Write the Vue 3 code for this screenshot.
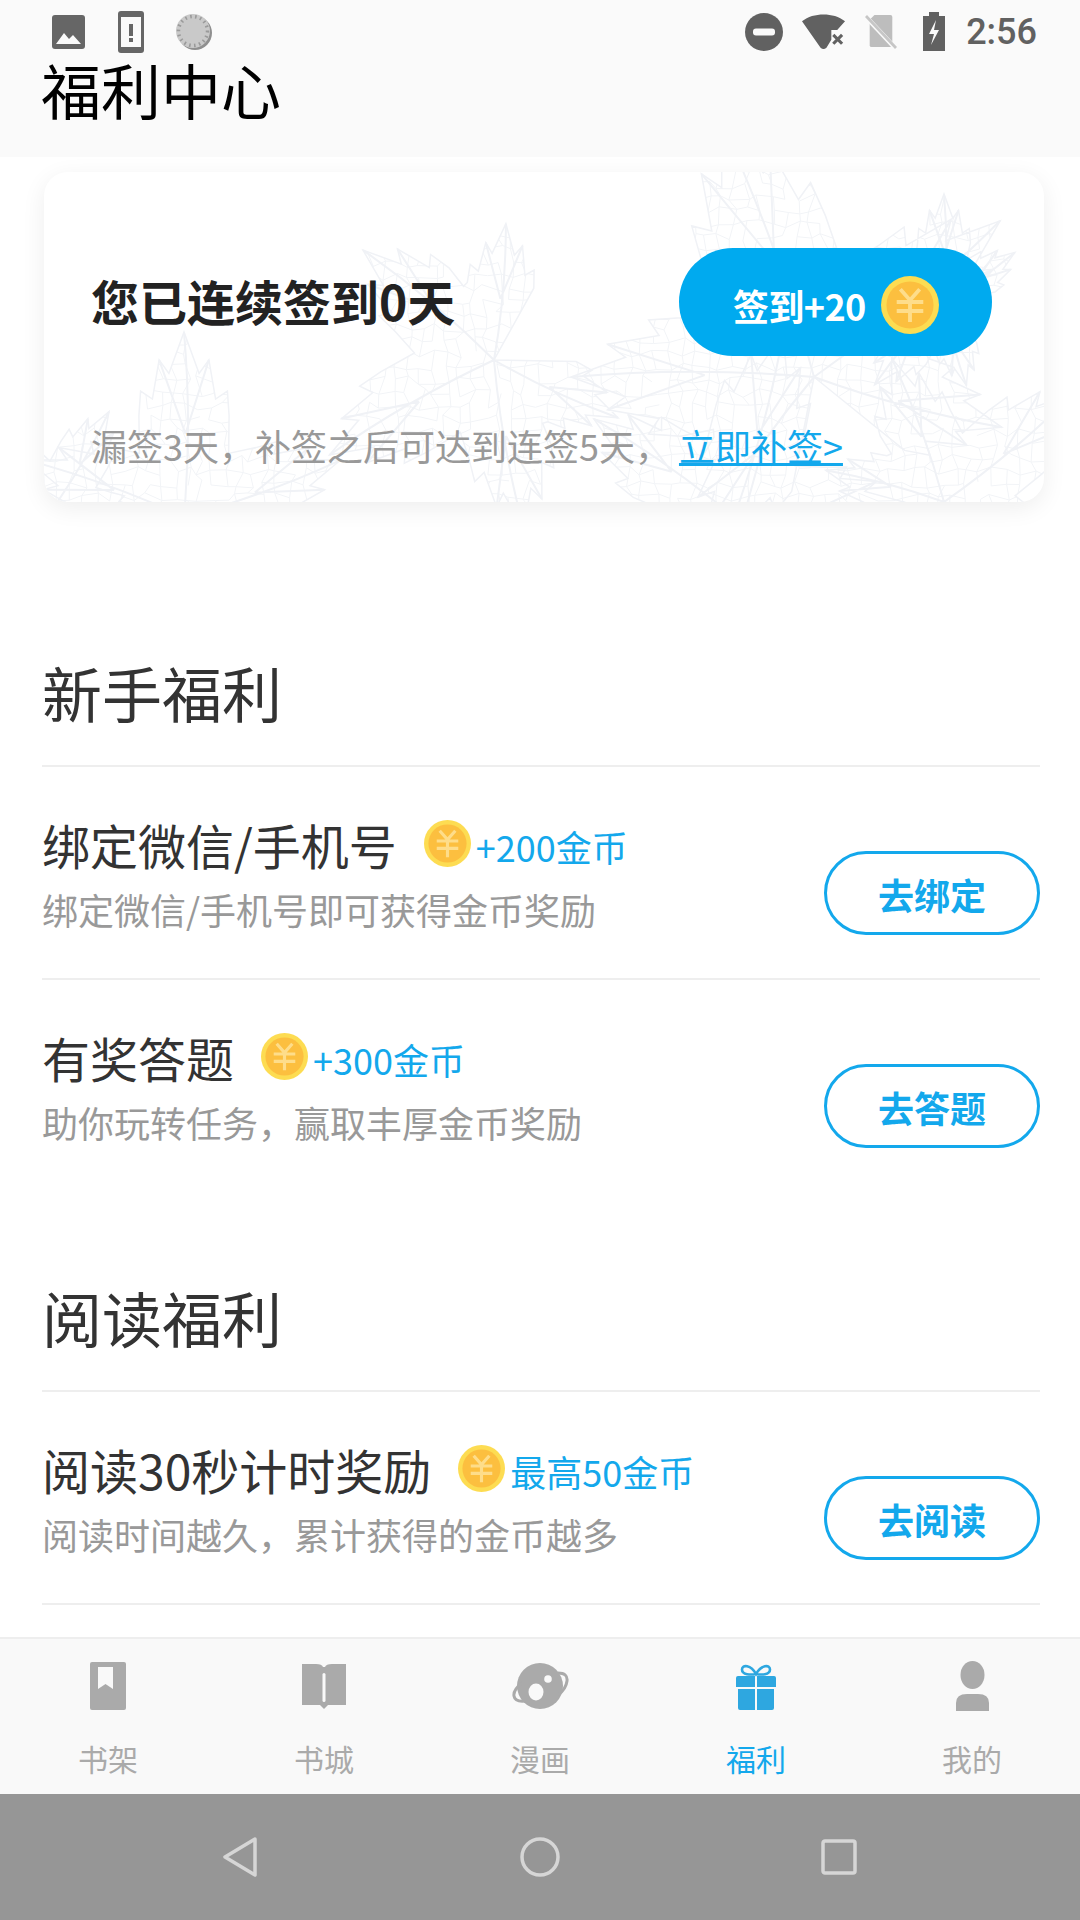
<template>
  <div class="page">
    <header class="top">
      <div class="status">
        <div class="status-left">
          <svg width="33" height="34" viewBox="0 0 33 34"><rect width="33" height="34" y="0" rx="3" fill="#666"/><path d="M4 29l8-11 5 6 4-4 8 9z" fill="#fafafa"/></svg>
          <svg width="26" height="42" viewBox="0 0 26 42"><rect width="26" height="42" rx="3" fill="#666"/><rect x="3" y="6" width="20" height="30" fill="#fafafa"/><rect x="11" y="13" width="4" height="12" fill="#666"/><rect x="11" y="27" width="4" height="4" fill="#666"/></svg>
          <svg class="sync" width="38" height="38" viewBox="0 0 38 38"><circle cx="20" cy="20" r="17" fill="#8f8f8f"/><circle cx="18" cy="18" r="17" fill="#c9c9c9"/><circle cx="18" cy="18" r="14.5" fill="none" stroke="#9a9a9a" stroke-width="3.5" stroke-dasharray="1.6 3.4"/></svg>
        </div>
        <div class="status-right">
          <svg width="38" height="38" viewBox="0 0 38 38"><circle cx="19" cy="19" r="19" fill="#616161"/><rect x="8" y="15.5" width="22" height="7" rx="3" fill="#fafafa"/></svg>
          <svg width="44" height="38" viewBox="0 0 45 38"><path d="M0 8C6 3 14 1 22 1s16 2 22 7L36 17H30V27L25 35Q22 38 19 35z" fill="#616161"/><path d="M32 22l9 9m0-9l-9 9" stroke="#616161" stroke-width="3.2"/></svg>
          <svg width="32" height="38" viewBox="0 0 34 38"><path d="M5 6V33q0 2 2 2H27q2 0 2-2V3q0-2-2-2H10z" fill="#bdbdbd"/><path d="M1 3L33 37" stroke="#fafafa" stroke-width="5"/><path d="M1 2L33 36" stroke="#c6c6c6" stroke-width="3"/></svg>
          <svg class="battery" width="22" height="39" viewBox="0 0 22 39"><path d="M6 0h10v4h6v35H0V4h6z" fill="#616161"/><path d="M13 8L6 22h5L8 33l8-15h-5z" fill="#fafafa"/></svg>
          <span class="time">2:56</span>
        </div>
      </div>
      <h1 class="page-title">福利中心</h1>
    </header>

    <main class="content">
      <section class="sign-card">
        <svg class="leaves" width="1000" height="330" viewBox="0 0 1000 330">
          <defs>
            <clipPath id="leaf-clip"><path :d="outlinePath"/></clipPath>
          </defs>
          <path :d="meshPath" clip-path="url(#leaf-clip)" fill="none" stroke="#f2f4f7" stroke-width="1"/>
          <path :d="outlinePath" fill="none" stroke="#f0f2f6" stroke-width="1.5"/>
          <path :d="veinPath" fill="none" stroke="#f0f2f6" stroke-width="2"/>
        </svg>
        <div class="sign-head">
          <div class="sign-title">您已连续签到0天</div>
          <button class="sign-btn">
            <span class="sign-btn-text">签到+20</span>
            <svg class="coin-big" viewBox="0 0 48 48"><use href="#coin"/></svg>
          </button>
        </div>
        <div class="sign-sub">漏签3天&#xFF0C;补签之后可达到连签5天&#xFF0C;<a class="sign-link">立即补签></a></div>
      </section>

      <svg width="0" height="0" class="defs">
        <symbol id="coin" viewBox="0 0 48 48">
          <circle cx="24" cy="24" r="24" fill="#fddc52"/>
          <circle cx="24" cy="24" r="19.5" fill="#fcbf3f"/>
          <path d="M16 11l8 9 8-9M13 21.5h22M13 29h22M24 20v18" fill="none" stroke="#fedd8a" stroke-width="3.2"/>
        </symbol>
      </svg>

      <section v-for="group in groups" :key="group.title" class="group" :class="group.cls">
        <h2 class="group-title">{{ group.title }}</h2>
        <div v-for="item in group.items" :key="item.title" class="row" :class="{ 'no-line': item.noLine }">
          <div class="row-text">
            <div class="row-title">
              <span>{{ item.title }}</span>
              <svg class="coin" viewBox="0 0 48 48"><use href="#coin"/></svg>
              <span class="reward">{{ item.reward }}</span>
            </div>
            <div class="row-sub">{{ item.sub }}</div>
          </div>
          <button class="go-btn">{{ item.action }}</button>
        </div>
      </section>
    </main>

    <nav class="tabs">
      <div v-for="tab in tabs" :key="tab.name" class="tab" :class="{ active: tab.active }">
        <div class="tab-icon">
          <svg v-if="tab.name === '书架'" width="36" height="48" viewBox="0 0 36 48"><rect width="36" height="48" rx="2" fill="#aaa"/><path d="M8 5h15v22l-7.500-5L8 27z" fill="#f9f9f9"/></svg>
          <svg v-else-if="tab.name === '书城'" width="44" height="46" viewBox="0 0 44 46"><path d="M0 1h14q6 0 7 3h2q1-3 7-3h14v41H26l-4 4-4-4H0z" fill="#aaa"/><rect x="20.500" y="10" width="3" height="29" rx="1.500" fill="#f9f9f9"/></svg>
          <svg v-else-if="tab.name === '漫画'" width="57" height="46" viewBox="0 0 57 46"><ellipse cx="28" cy="23" rx="23" ry="23" fill="#aaa"/><path d="M46 10q10 0 9 8t-9 14" fill="none" stroke="#aaa" stroke-width="3"/><path d="M10 20q-9 7-8 13t11 5" fill="none" stroke="#aaa" stroke-width="3"/><ellipse cx="24" cy="29" rx="7.500" ry="8.500" fill="#f9f9f9"/><circle cx="36" cy="16" r="3.800" fill="#f9f9f9"/></svg>
          <svg v-else-if="tab.name === '福利'" width="40" height="47" viewBox="0 0 40 47"><path d="M20 11C15 2 6 1 6 6.500S15 12 20 11c5 1 14 1 14-4.500S25 2 20 11z" fill="none" stroke="#2ea7e0" stroke-width="2.600"/><path d="M2 13h17v11H0V15q0-2 2-2zm19 0h17q2 0 2 2v9H21zM2 26h17v21H4q-2 0-2-2zm19 0h17v19q0 2-2 2H21z" fill="#2ea7e0"/></svg>
          <svg v-else width="33" height="50" viewBox="0 0 33 50"><ellipse cx="16.500" cy="14" rx="12" ry="14" fill="#aaa"/><path d="M0 50V42Q0 33 11 33H22Q33 33 33 42V50z" fill="#aaa"/></svg>
        </div>
        <span class="tab-label">{{ tab.name }}</span>
      </div>
    </nav>

    <footer class="sys-nav">
      <svg width="36" height="42" viewBox="0 0 36 42"><path d="M33 3L3 21l30 18z" fill="none" stroke="#d6d6d6" stroke-width="3.500" stroke-linejoin="round"/></svg>
      <svg width="40" height="40" viewBox="0 0 40 40"><circle cx="20" cy="20" r="18" fill="none" stroke="#d6d6d6" stroke-width="3.500"/></svg>
      <svg width="36" height="36" viewBox="0 0 36 36"><rect x="2" y="2" width="32" height="32" rx="2" fill="none" stroke="#d6d6d6" stroke-width="3.500"/></svg>
    </footer>
  </div>
</template>

<script setup>
const groups = [
  {
    title: '新手福利',
    cls: 'first',
    items: [
      { title: '绑定微信/手机号', reward: '+200金币', sub: '绑定微信/手机号即可获得金币奖励', action: '去绑定' },
      { title: '有奖答题', reward: '+300金币', sub: '助你玩转任务\uFF0C赢取丰厚金币奖励', action: '去答题', noLine: true }
    ]
  },
  {
    title: '阅读福利',
    cls: 'second',
    items: [
      { title: '阅读30秒计时奖励', reward: '最高50金币', sub: '阅读时间越久\uFF0C累计获得的金币越多', action: '去阅读' }
    ]
  }
];

const tabs = [
  { name: '书架' },
  { name: '书城' },
  { name: '漫画' },
  { name: '福利', active: true },
  { name: '我的' }
];

// faint maple leaf skeletons behind the sign-in card
let seed = 11;
const rnd = () => {
  seed = (seed * 16807) % 2147483647;
  return seed / 2147483647;
};

const leaves = [
  { x: 450, y: 188, rot: 150, size: 190 },
  { x: 770, y: 205, rot: 250, size: 270 },
  { x: 140, y: 345, rot: 270, size: 185 },
  { x: 690, y: 345, rot: 285, size: 190 },
  { x: 900, y: 130, rot: 200, size: 120 },
  { x: 900, y: 330, rot: 320, size: 170 },
  { x: 10, y: 335, rot: 300, size: 110 }
];

const lobes = [
  [-125, 0.72],
  [-70, 0.9],
  [0, 1],
  [70, 0.9],
  [125, 0.72]
];

const polar = (leaf, deg, r) => {
  const a = ((leaf.rot + deg) * Math.PI) / 180;
  return [leaf.x + Math.cos(a) * r, leaf.y + Math.sin(a) * r];
};
const fmt = p => p[0].toFixed(1) + ' ' + p[1].toFixed(1);

let outline = '';
let veins = '';
for (const leaf of leaves) {
  const pts = [[leaf.x, leaf.y]];
  lobes.forEach(([deg, k], i) => {
    const r = leaf.size * k;
    // teeth climbing to the lobe tip and back down
    [[-24, 0.6], [-19, 0.72], [-15, 0.66], [-9, 0.86], [-6, 0.78], [0, 1], [6, 0.78], [9, 0.86], [15, 0.66], [19, 0.72], [24, 0.6]].forEach(([d, f]) => {
      pts.push(polar(leaf, deg + d, r * f));
    });
    if (i < lobes.length - 1) pts.push(polar(leaf, (deg + lobes[i + 1][0]) / 2, leaf.size * 0.42));
    const tip = polar(leaf, deg, r);
    const bend = polar(leaf, deg + 5, r * 0.5);
    veins += `M${fmt([leaf.x, leaf.y])}Q${fmt(bend)} ${fmt(tip)}`;
    // side veins towards the teeth
    veins += `M${fmt(polar(leaf, deg + 1, r * 0.45))}L${fmt(polar(leaf, deg - 9, r * 0.86))}`;
    veins += `M${fmt(polar(leaf, deg + 1, r * 0.45))}L${fmt(polar(leaf, deg + 9, r * 0.86))}`;
  });
  outline += 'M' + pts.map(fmt).join('L') + 'Z';
}

// jittered net of small cells, clipped to the leaves
const cell = 13;
const nodes = [];
for (let r = 0; r <= 26; r++) {
  const line = [];
  for (let c = 0; c <= 78; c++) {
    line.push([c * cell + (rnd() - 0.5) * 9, r * cell + (rnd() - 0.5) * 9]);
  }
  nodes.push(line);
}
let mesh = '';
nodes.forEach((line, r) => {
  line.forEach((p, c) => {
    if (line[c + 1] && rnd() > 0.18) mesh += `M${fmt(p)}L${fmt(line[c + 1])}`;
    if (nodes[r + 1] && rnd() > 0.18) mesh += `M${fmt(p)}L${fmt(nodes[r + 1][c])}`;
  });
});

const outlinePath = outline;
const veinPath = veins;
const meshPath = mesh;
</script>

<style>
html,
body {
  margin: 0;
  background: #fff;
}
</style>

<style scoped>
.page {
  width: 1080px;
  height: 1920px;
  display: flex;
  flex-direction: column;
  overflow: hidden;
  background: #fff;
  font-family: "Noto Sans CJK SC", "Noto Sans", sans-serif;
}

.top {
  height: 157px;
  flex: none;
  background: #fafafa;
}

.status {
  height: 63px;
  display: flex;
  justify-content: space-between;
  align-items: center;
  padding: 0 43px 0 52px;
}

.status-left,
.status-right {
  display: flex;
  align-items: center;
}

.status-left {
  gap: 33px;
}

.sync {
  margin-left: -2px;
}

.status-right {
  gap: 19px;
}

.battery {
  margin-left: 7px;
}

.time {
  font-family: Roboto, sans-serif;
  font-size: 36px;
  font-weight: 500;
  color: #616161;
  margin-left: 2px;
}

.page-title {
  margin: -4px 0 0 41px;
  font-size: 60px;
  line-height: 60px;
  font-weight: 400;
  color: #000;
}

.content {
  flex: 1;
  min-height: 0;
  overflow: hidden;
  padding: 15px 40px 0 42px;
}

.sign-card {
  position: relative;
  width: 1000px;
  height: 330px;
  box-sizing: border-box;
  margin-left: 2px;
  padding: 76px 52px 0 47px;
  overflow: hidden;
  background: #fff;
  border-radius: 24px;
  box-shadow: 0 6px 24px rgba(0, 0, 0, 0.07);
}

.leaves {
  position: absolute;
  left: 0;
  top: 0;
}

.sign-head {
  position: relative;
  display: flex;
  justify-content: space-between;
  align-items: center;
}

.sign-title {
  padding-bottom: 4px;
  font-size: 48px;
  font-weight: 700;
  color: #222;
}

.sign-btn {
  width: 313px;
  height: 108px;
  display: flex;
  align-items: center;
  padding: 6px 0 0 54px;
  gap: 15px;
  border: none;
  border-radius: 54px;
  background: #00aaef;
  color: #fff;
  font-family: inherit;
  font-size: 36px;
  font-weight: 700;
}

.sign-btn-text {
  letter-spacing: -0.6px;
}

.coin-big {
  width: 58px;
  height: 58px;
}

.sign-sub {
  position: relative;
  margin-top: 64px;
  font-size: 36px;
  line-height: 50px;
  color: #999;
}

.sign-link {
  margin-left: 8px;
  color: #13a8ec;
  text-decoration: underline;
}

.defs {
  position: absolute;
}

.group.first {
  margin-top: 150px;
}

.group.second {
  margin-top: 84px;
}

.group-title {
  margin: 0;
  padding-bottom: 33px;
  border-bottom: 2px solid #eee;
  font-size: 60px;
  line-height: 80px;
  font-weight: 400;
  color: #333;
}

.row {
  height: 213px;
  box-sizing: border-box;
  display: flex;
  justify-content: space-between;
  border-bottom: 2px solid #eee;
}

.row.no-line {
  border-bottom: none;
}

.row-text {
  padding-top: 47px;
}

.row-title {
  display: flex;
  align-items: center;
  height: 60px;
  font-size: 48px;
  color: #333;
}

.coin {
  width: 47px;
  height: 47px;
  margin: -2px 5px 0 27px;
}

.reward {
  margin-top: 4px;
  font-size: 36px;
  color: #13a8ec;
}

.row-sub {
  margin-top: 10px;
  font-size: 36px;
  line-height: 50px;
  color: #999;
}

.go-btn {
  width: 216px;
  height: 84px;
  margin-top: 84px;
  padding: 2px 0 0;
  box-sizing: border-box;
  border: 3px solid #13a8ec;
  border-radius: 42px;
  background: transparent;
  color: #13a8ec;
  font-family: inherit;
  font-size: 36px;
  font-weight: 700;
}

.tabs {
  height: 157px;
  flex: none;
  box-sizing: border-box;
  display: grid;
  grid-template-columns: repeat(5, 1fr);
  background: #f9f9f9;
  border-top: 2px solid #eee;
}

.tab {
  display: flex;
  flex-direction: column;
  align-items: center;
  padding-top: 20px;
}

.tab-icon {
  height: 54px;
  display: flex;
  align-items: center;
}

.tab-label {
  margin-top: 25px;
  font-size: 30px;
  line-height: 40px;
  color: #aaa;
}

.tab.active .tab-label {
  color: #13a8ec;
}

.sys-nav {
  height: 126px;
  flex: none;
  display: grid;
  grid-template-columns: 36px 40px 36px;
  justify-content: space-between;
  align-items: center;
  padding: 0 223px 0 222px;
  background: #969696;
}
</style>
